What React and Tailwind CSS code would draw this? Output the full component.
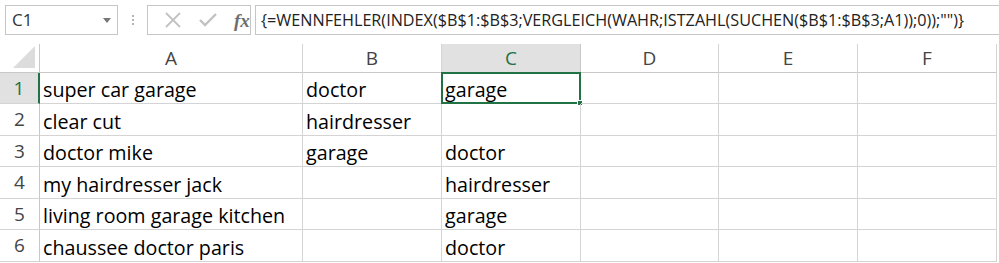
import React from 'react';

const cols = [
  { key: 'A', w: 'w-[263px]' },
  { key: 'B', w: 'w-[139px]' },
  { key: 'C', w: 'w-[139px]' },
  { key: 'D', w: 'w-[138px]' },
  { key: 'E', w: 'w-[139px]' },
  { key: 'F', w: 'w-[139px]' },
];

const rows = [
  { n: 1, h: 'h-[31px]', A: 'super car garage', B: 'doctor', C: 'garage' },
  { n: 2, h: 'h-[32px]', A: 'clear cut', B: 'hairdresser', C: '' },
  { n: 3, h: 'h-[31px]', A: 'doctor mike', B: 'garage', C: 'doctor' },
  { n: 4, h: 'h-[32px]', A: 'my hairdresser jack', B: '', C: 'hairdresser' },
  { n: 5, h: 'h-[31px]', A: 'living room garage kitchen', B: '', C: 'garage' },
  { n: 6, h: 'h-[32px]', A: 'chaussee doctor paris', B: '', C: 'doctor' },
];

const formula = '{=WENNFEHLER(INDEX($B$1:$B$3;VERGLEICH(WAHR;ISTZAHL(SUCHEN($B$1:$B$3;A1));0));"")}';

function FormulaBar() {
  return (
    <div className="flex items-center h-[44px] pt-[5px] pb-[9px] pl-[5px] bg-white">
      {/* Name box */}
      <div className="flex items-center justify-between w-[113px] h-full border border-[#c6c6c6] pl-[6px] pr-[6px]">
        <span className="text-[17px] text-[#333]">C1</span>
        <svg width="8" height="5" viewBox="0 0 8 5"><path d="M0 0h8L4 5z" fill="#777" /></svg>
      </div>
      {/* dots */}
      <div className="flex flex-col items-center justify-center gap-[2px] w-[29px] h-full">
        <span className="w-[2px] h-[2px] bg-[#b5b5b5]" />
        <span className="w-[2px] h-[2px] bg-[#b5b5b5]" />
        <span className="w-[2px] h-[2px] bg-[#b5b5b5]" />
      </div>
      {/* cancel / enter / fx */}
      <div className="flex items-center w-[104px] h-full border border-[#c6c6c6] pl-[16px] gap-[17px]">
        <svg width="18" height="16" viewBox="0 0 18 16">
          <path d="M2 1L16 15M16 1L2 15" stroke="#c2c2c2" strokeWidth="1.8" fill="none" />
        </svg>
        <svg width="18" height="14" viewBox="0 0 18 14">
          <path d="M1 7l5 5L17 1" stroke="#c2c2c2" strokeWidth="2.4" fill="none" />
        </svg>
        <span className="text-[19px] italic font-bold text-[#6e6e6e] leading-none" style={{ fontFamily: '"Liberation Serif", serif' }}>fx</span>
      </div>
      {/* formula text */}
      <div className="flex items-center flex-1 h-full ml-[4px] border border-[#c6c6c6] border-r-0 pl-[5px]">
        <span className="text-[16.2px] text-[#222] whitespace-nowrap">{formula}</span>
      </div>
    </div>
  );
}

function HeaderRow() {
  return (
    <div className="flex h-[29px]">
      <div className="w-[40px] h-full border-r border-b border-[#c8c8c8] bg-white flex items-end justify-end pr-[4px] pb-[4px]">
        <svg width="22" height="22" viewBox="0 0 22 22"><path d="M22 0V22H0z" fill="#dcdcdc" /></svg>
      </div>
      {cols.map((c) => (
        <div
          key={c.key}
          className={`${c.w} h-full flex items-center justify-center border-r border-b text-[19px] ${
            c.key === 'C'
              ? 'bg-[#e1e1e1] text-[#217346] border-b-[#217346] border-r-[#c8c8c8]'
              : 'bg-white text-[#444] border-[#d4d4d4] border-b-[#c8c8c8]'
          }`}
        >
          {c.key}
        </div>
      ))}
    </div>
  );
}

function DataRow({ r }) {
  const active = r.n === 1;
  return (
    <div className={`flex ${r.h}`}>
      <div
        className={`w-[40px] h-full flex items-center justify-center text-[19px] border-b border-[#d4d4d4] ${
          active
            ? 'bg-[#e1e1e1] text-[#217346] border-r-2 border-r-[#217346]'
            : 'bg-white text-[#444] border-r border-r-[#c8c8c8]'
        }`}
      >
        {r.n}
      </div>
      {cols.map((c) => (
        <div
          key={c.key}
          className={`${c.w} h-full relative flex items-end pl-[3px] pb-[3px] border-r border-b border-[#d4d4d4] text-[19.7px] text-black whitespace-nowrap leading-none`}
        >
          {r[c.key] || ''}
          {active && c.key === 'C' && (
            <div className="absolute -left-px -top-px -right-px -bottom-px border-2 border-[#217346]">
              <div className="absolute -right-[4px] -bottom-[4px] w-[6px] h-[6px] bg-[#217346] border border-white" />
            </div>
          )}
        </div>
      ))}
    </div>
  );
}

export default function App() {
  return (
    <div className="w-[999px] h-[263px] bg-white overflow-hidden" style={{ fontFamily: '"Open Sans", "Noto Sans", sans-serif' }}>
      <FormulaBar />
      <HeaderRow />
      {rows.map((r) => (
        <DataRow key={r.n} r={r} />
      ))}
    </div>
  );
}
